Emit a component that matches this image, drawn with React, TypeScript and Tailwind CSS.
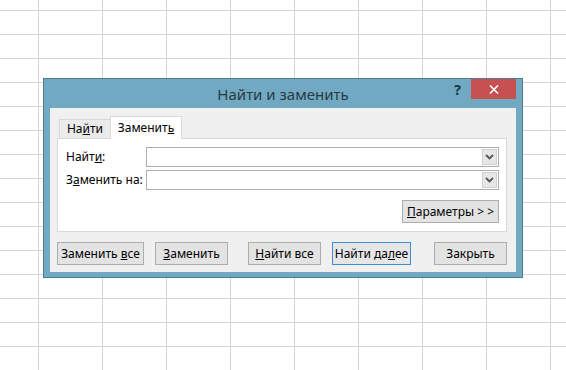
import type { ReactNode } from "react";

const font = "font-['Noto_Sans','Open_Sans',sans-serif]";

function Btn({
  children,
  className = "",
  primary = false,
}: {
  children: ReactNode;
  className?: string;
  primary?: boolean;
}) {
  return (
    <button
      type="button"
      className={`h-[23px] border text-[12px] leading-none text-black flex items-center justify-center ${
        primary
          ? "border-[#3c8fd6] bg-[#e6e6e6]"
          : "border-[#adadad] bg-[#e3e3e3]"
      } ${className}`}
    >
      <span className="whitespace-pre">{children}</span>
    </button>
  );
}

function Combo() {
  return (
    <div className="w-[354px] h-[20px] border border-[#abadb3] bg-white flex justify-end items-stretch p-px">
      <div className="w-[15px] bg-[#e6e6e6] border border-[#d0d0d0] flex items-center justify-center">
        <svg width="9" height="6" viewBox="0 0 9 6">
          <path d="M1 1 L4.5 4.5 L8 1" fill="none" stroke="#555" strokeWidth="1.8" />
        </svg>
      </div>
    </div>
  );
}

export default function App() {
  return (
    <div
      className={`${font} w-[566px] h-[370px] overflow-hidden bg-white bg-[image:linear-gradient(to_right,#d4d4d4_1px,transparent_1px),linear-gradient(to_bottom,#d4d4d4_1px,transparent_1px)] bg-[size:64px_24px] bg-[position:38px_10px] pt-[78px] pl-[43px]`}
    >
      {/* Dialog */}
      <div className="w-[480px] h-[200px] border border-[#4b7d93] bg-[#70a9c1] flex flex-col">
        {/* Title bar */}
        <div className="h-[29px] grid grid-cols-[1fr_auto_1fr]">
          <div />
          <div className="text-[15px] text-[#2b3a42] pt-[5px] leading-[20px]">
            Найти и заменить
          </div>
          <div className="flex justify-end items-start">
            <span className="text-[14px] font-bold text-[#1d3344] mt-[3px] mr-[10px] leading-[16px]">
              ?
            </span>
            <div className="w-[45px] h-[20px] bg-[#c75050] mr-[6px] flex items-center justify-center">
              <svg width="10" height="9" viewBox="0 0 10 9">
                <path d="M1 0.5 L9 8.5 M9 0.5 L1 8.5" stroke="#fff" strokeWidth="1.6" />
              </svg>
            </div>
          </div>
        </div>

        {/* Client area */}
        <div className="mx-[6px] h-[164px] bg-[#f0f0f0] pt-[8px] pl-[7px]">
          {/* Tabs */}
          <div className="flex items-end h-[22px] pl-[2px]">
            <div className="h-[19px] w-[51px] border border-b-0 border-r-0 border-[#d9d9d9] bg-[#ebebeb] text-[12px] flex items-center justify-center">
              <span>
                На<u>й</u>ти
              </span>
            </div>
            <div className="relative h-[23px] -mb-px w-[72px] border border-b-0 border-[#d9d9d9] bg-white text-[12px] flex items-center justify-center z-10">
              <span>
                Заменит<u>ь</u>
              </span>
            </div>
          </div>

          {/* Panel */}
          <div className="w-[450px] h-[94px] border border-[#d9d9d9] bg-white pt-[8px] pl-[8px] pr-[7px]">
            <div className="flex items-center h-[20px]">
              <span className="w-[80px] text-[12px]">
                Найт<u>и</u>:
              </span>
              <Combo />
            </div>
            <div className="flex items-center h-[20px] mt-[3px]">
              <span className="w-[80px] text-[12px]">
                З<u>а</u>менить на:
              </span>
              <Combo />
            </div>
            <div className="flex justify-end mt-[10px]">
              <Btn className="w-[97px] h-[21px]">
                <u>П</u>араметры &gt; &gt;
              </Btn>
            </div>
          </div>

          {/* Buttons */}
          <div className="flex mt-[10px]">
            <Btn className="w-[87px]">
              Заменить <u>в</u>се
            </Btn>
            <Btn className="w-[73px] ml-[11px]">
              <u>З</u>аменить
            </Btn>
            <Btn className="w-[73px] ml-[20px]">
              <u>Н</u>айти все
            </Btn>
            <Btn primary className="w-[79px] ml-[11px]">
              Найти да<u>л</u>ее
            </Btn>
            <Btn className="w-[73px] ml-[23px]">Закрыть</Btn>
          </div>
        </div>
      </div>
    </div>
  );
}
